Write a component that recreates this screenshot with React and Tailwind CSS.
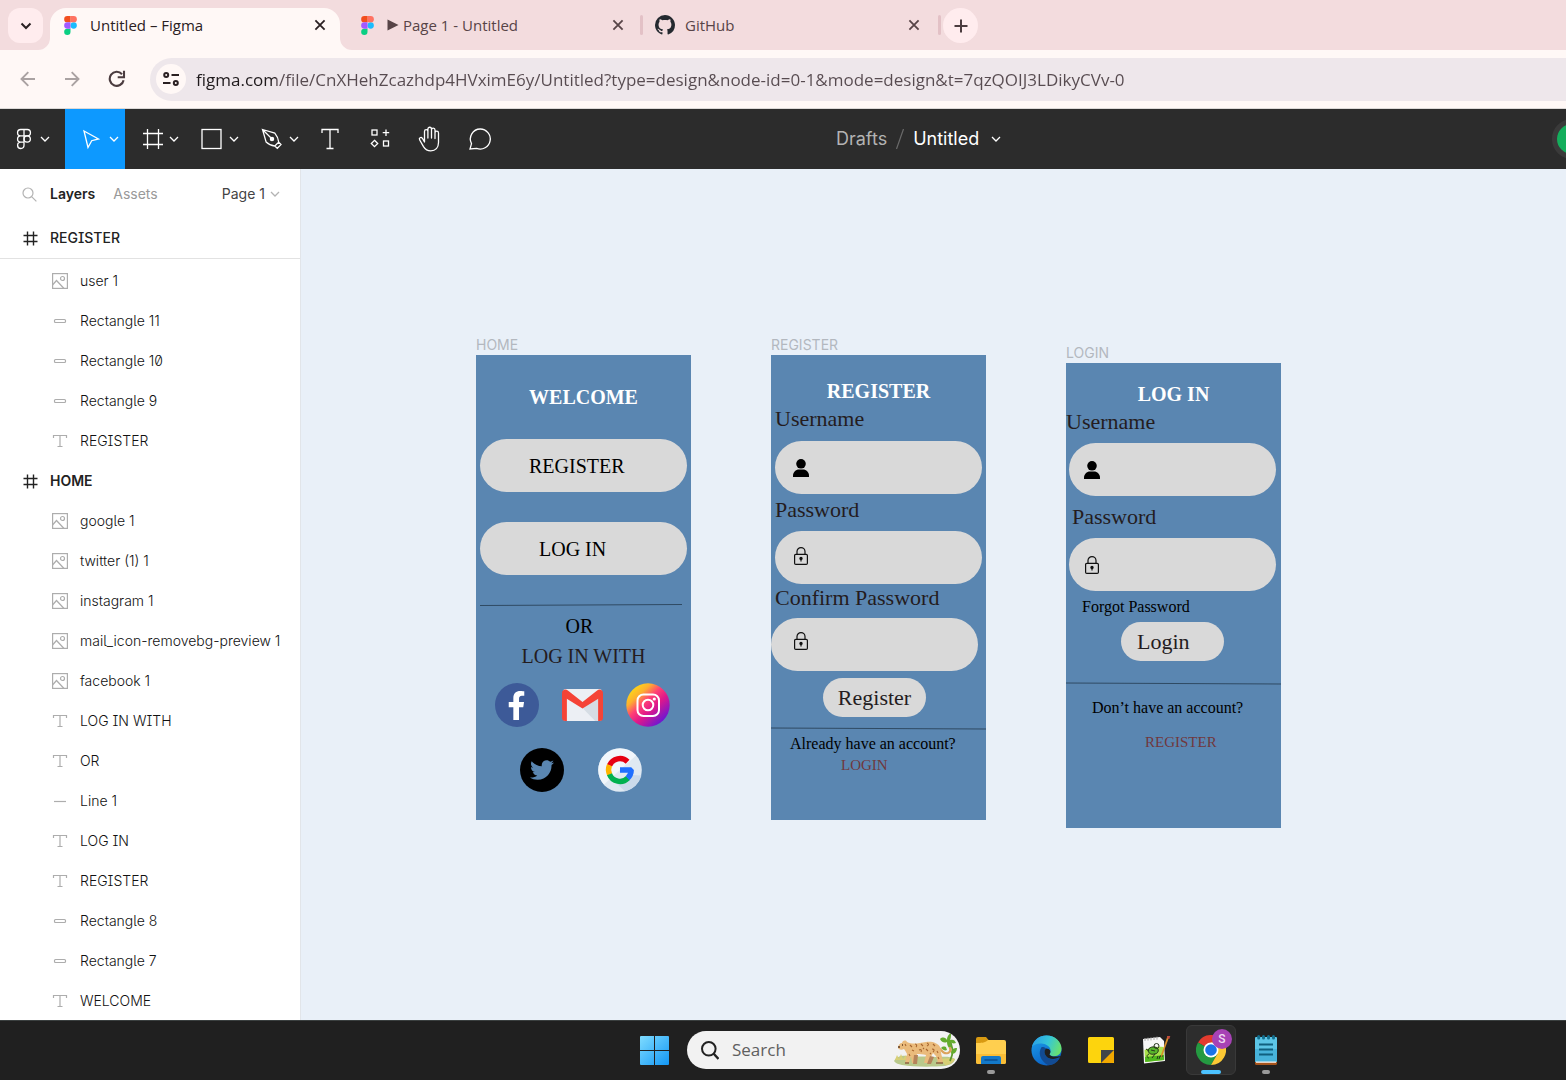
import React from "react";
import { FaFacebookF, FaTwitter } from "react-icons/fa";
import { VscGithubInverted } from "react-icons/vsc";

/* ---------- browser chrome icons ---------- */

function FigmaLogo() {
  return (
    <svg width="13" height="19" viewBox="0 0 38 57" className="shrink-0">
      <path fill="#1abcfe" d="M19 28.5a9.5 9.5 0 1 1 19 0 9.5 9.5 0 0 1-19 0z" />
      <path fill="#0acf83" d="M0 47.5A9.5 9.5 0 0 1 9.5 38H19v9.5a9.5 9.5 0 1 1-19 0z" />
      <path fill="#ff7262" d="M19 0v19h9.5a9.5 9.5 0 1 0 0-19H19z" />
      <path fill="#f24e1e" d="M0 9.5A9.5 9.5 0 0 0 9.5 19H19V0H9.5A9.5 9.5 0 0 0 0 9.5z" />
      <path fill="#a259ff" d="M0 28.5A9.5 9.5 0 0 0 9.5 38H19V19H9.5A9.5 9.5 0 0 0 0 28.5z" />
    </svg>
  );
}

function Cross() {
  return (
    <svg width="12" height="12" viewBox="0 0 12 12" fill="none" stroke="currentColor" strokeWidth="1.8">
      <path d="M1.4 1.4l9.2 9.2M10.6 1.4l-9.2 9.2" />
    </svg>
  );
}

function TabFoot({ flip }) {
  return (
    <svg
      width="12"
      height="12"
      viewBox="0 0 12 12"
      fill="#fff8f6"
      className={flip ? "absolute -right-3 bottom-0" : "absolute -left-3 bottom-0"}
    >
      {flip ? <path d="M0 0v12h12A12 12 0 0 1 0 0z" /> : <path d="M12 0v12H0A12 12 0 0 0 12 0z" />}
    </svg>
  );
}

function Tab({ icon, title, active, className }) {
  return (
    <div
      className={
        "relative flex h-[42px] items-center gap-3 text-[15px] " +
        (active ? "rounded-t-2xl bg-[#fff8f6] text-[#2a2022] " : "text-[#574447] ") +
        className
      }
    >
      {active && <TabFoot />}
      {active && <TabFoot flip />}
      <span className="flex w-4 shrink-0 justify-center">{icon}</span>
      <span className="grow truncate pb-2 leading-5">{title}</span>
      <button aria-label="Close tab" className="pb-2">
        <Cross />
      </button>
    </div>
  );
}

function TabStrip() {
  return (
    <div className="flex h-[50px] items-end bg-[#f3dcde] font-['Open_Sans','Noto_Sans',sans-serif]">
      <button aria-label="Search tabs" className="mr-[7px] mb-[7px] ml-2 flex size-[35px] shrink-0 items-center justify-center rounded-xl bg-[#ffecee] text-[#2a2022]">
        <svg width="12" height="8" viewBox="0 0 12 8" fill="none" stroke="currentColor" strokeWidth="2">
          <path d="M1.5 1.5L6 6l4.500-4.500" />
        </svg>
      </button>
      <Tab active className="w-[290px] pr-3.5 pl-3" title="Untitled – Figma" icon={<span className="pb-2"><FigmaLogo /></span>} />
      <Tab
        className="ml-[7px] w-[291px] pr-3.5 pl-3"
        icon={<span className="pb-2"><FigmaLogo /></span>}
        title={
          <span className="flex items-center gap-1">
            <svg width="12" height="12" viewBox="0 0 12 12" fill="currentColor">
              <path d="M.5.5L11.500 6 .5 11.500z" />
            </svg>
            Page 1 - Untitled
          </span>
        }
      />
      <span className="mb-[15px] ml-0.5 h-5 w-[3px] rounded bg-[#e3c1c6]" />
      <Tab className="w-[295px] pr-[18px] pl-3.5" title="GitHub" icon={<VscGithubInverted size={20} color="#24292f" className="mb-2 shrink-0" />} />
      <span className="mb-[15px] h-5 w-[3px] rounded bg-[#e3c1c6]" />
      <button aria-label="New tab" className="mb-[7px] ml-0.5 flex size-[35px] shrink-0 items-center justify-center rounded-full bg-[#ffecee] text-[#4b3c3f]">
        <svg width="14" height="14" viewBox="0 0 14 14" fill="none" stroke="currentColor" strokeWidth="2">
          <path d="M7 .5v13M.5 7h13" />
        </svg>
      </button>
    </div>
  );
}

function AddressBar() {
  return (
    <div className="flex h-[59px] items-center border-b border-[#dcd9d7] bg-[#fff8f6]">
      <button aria-label="Back" className="ml-5 text-[#aaa2a2]">
        <svg width="16" height="16" viewBox="0 0 16 16" fill="none" stroke="currentColor" strokeWidth="1.9">
          <path d="M15 8H1.800M8.300 1.200L1.500 8l6.800 6.800" />
        </svg>
      </button>
      <button aria-label="Forward" className="ml-7 text-[#aaa2a2]">
        <svg width="16" height="16" viewBox="0 0 16 16" fill="none" stroke="currentColor" strokeWidth="1.900">
          <path d="M1 8h13.200M7.700 1.200L14.500 8l-6.800 6.800" />
        </svg>
      </button>
      <button aria-label="Reload" className="ml-7 text-[#4b3c3f]">
        <svg width="18" height="18" viewBox="0 0 18 18" fill="none" stroke="currentColor" strokeWidth="2.100">
          <path d="M15.600 10.200A7 7 0 1 1 14 4.200" />
          <path d="M16 .8v6.400H9.700" />
        </svg>
      </button>
      <div className="ml-6 flex h-[43px] grow items-center rounded-l-full bg-[#eee7eb]">
        <button aria-label="Site information" className="ml-1.5 flex size-[30px] shrink-0 items-center justify-center rounded-full bg-[#fff8f6] text-[#2a2022]">
          <svg width="16" height="14" viewBox="0 0 16 14" fill="none" stroke="currentColor" strokeWidth="2">
            <circle cx="3.200" cy="3" r="2" />
            <path d="M8.500 3H16M0 11h7.500" />
            <circle cx="12.800" cy="11" r="2" />
          </svg>
        </button>
        <input
          aria-label="Address"
          readOnly
          value="figma.com/file/CnXHehZcazhdp4HVximE6y/Untitled?type=design&node-id=0-1&mode=design&t=7qzQOIJ3LDikyCVv-0"
          className="ml-2.5 h-8 min-w-0 grow bg-[linear-gradient(to_right,#1f1a1c_80px,#574b50_80px)] bg-clip-text font-['Open_Sans','Noto_Sans',sans-serif] text-[17px] text-transparent outline-none"
        />
      </div>
    </div>
  );
}

/* ---------- editor toolbar ---------- */

function Chevron({ className = "" }) {
  return (
    <svg width="10" height="6" viewBox="0 0 10 6" fill="none" stroke="currentColor" strokeWidth="1.300" className={"shrink-0 " + className}>
      <path d="M1 1l4 4 4-4" />
    </svg>
  );
}

function ToolIcon({ children }) {
  return (
    <svg width="24" height="24" viewBox="0 0 24 24" fill="none" stroke="currentColor" strokeWidth="1.300" className="shrink-0">
      {children}
    </svg>
  );
}

function Toolbar() {
  const menuTool = "flex h-full w-[60px] shrink-0 items-center gap-[5px] pl-[15px]";
  const tool = "flex h-full w-[50px] shrink-0 items-center justify-center";
  return (
    <div className="flex h-[60px] items-center overflow-hidden bg-[#2c2c2c] text-white">
      <div className="flex h-full shrink-0">
        <button aria-label="Main menu" className="flex h-full w-[65px] items-center gap-1 pl-3">
          <ToolIcon>
            <path d="M8.700 2.500H12v6.300H8.700a3.150 3.150 0 0 1 0-6.300zM12 2.500h3.300a3.150 3.150 0 0 1 0 6.300H12zM8.700 8.800H12v6.300H8.700a3.150 3.150 0 0 1 0-6.300zM8.700 15.100H12v3.200a3.200 3.200 0 1 1-3.300-3.200z" />
            <circle cx="15.200" cy="11.950" r="3.150" />
          </ToolIcon>
          <Chevron />
        </button>
        <button aria-label="Move" className="flex h-full w-[60px] items-center gap-1.5 bg-[#0d99ff] pl-3.5">
          <ToolIcon>
            <path d="M5 4l14.500 8-6.800 1.700L9 20.500z" strokeLinejoin="miter" />
          </ToolIcon>
          <Chevron />
        </button>
        <button aria-label="Frame" className={menuTool}>
          <ToolIcon>
            <path d="M7.500 2v20M18.500 2v20M3 6.500h20M3 17.500h20" />
          </ToolIcon>
          <Chevron />
        </button>
        <button aria-label="Shape" className={menuTool}>
          <ToolIcon>
            <rect x="2" y="2.500" width="19" height="19" />
          </ToolIcon>
          <Chevron />
        </button>
        <button aria-label="Pen" className={menuTool}>
          <ToolIcon>
            <path d="M2.500 2.500l12.300 3.600c2.300 2.700 3.500 5.700 3.900 9l2.300 2.500-3.700 3.700-2.500-2.300c-3.300-.4-6.300-1.600-8.700-4z M14.800 19l3.900-3.900M2.500 2.500l8.300 8.300" />
            <circle cx="12" cy="12" r="1.600" fill="currentColor" />
          </ToolIcon>
          <Chevron />
        </button>
        <button aria-label="Text" className={tool}>
          <ToolIcon>
            <path d="M4 6V2.500h16V6M12 2.500v19M8.500 21.500h7" />
          </ToolIcon>
        </button>
        <button aria-label="Resources" className={tool}>
          <ToolIcon>
            <rect x="4" y="3" width="5" height="5" />
            <path d="M18 2.500v6.500M14.700 5.700h6.500M6.500 13.300l3.200 3.200-3.200 3.200-3.200-3.200z" />
            <rect x="15.500" y="14" width="5" height="5" />
          </ToolIcon>
        </button>
        <button aria-label="Hand" className={tool}>
          <svg width="26" height="28" viewBox="0 0 26 28" fill="none" stroke="currentColor" strokeWidth="1.300" strokeLinejoin="round" className="shrink-0">
            <path d="M7.500 17V6.400c0-2.400 3.400-2.400 3.400 0V13 4.200c0-2.600 3.600-2.600 3.600 0V13 5c0-2.500 3.500-2.500 3.500 0v8.500V8c0-2.400 3.500-2.400 3.500 0v9.500c0 5-3 8.300-7.700 8.300-4 0-5.800-1.800-7.300-4.200L2.700 15c-1.200-2 1.300-3.500 2.700-1.700z" />
          </svg>
        </button>
        <button aria-label="Comment" className={tool}>
          <ToolIcon>
            <path d="M12.200 2A10 10 0 1 1 8.600 21.300L2 22l1.500-5.400A10 10 0 0 1 12.200 2z" />
          </ToolIcon>
        </button>
      </div>
      <div className="ml-[331px] flex shrink-0 items-center font-['Inter',sans-serif] text-[18px] leading-6">
        <a href="#drafts" className="text-[#b3b3b3]">Drafts</a>
        <svg width="10" height="20" viewBox="0 0 10 20" stroke="#6b6b6b" strokeWidth="1.200" className="mx-2">
          <path d="M1.500 20L8.500 0" />
        </svg>
        <button className="flex items-center gap-3">
          Untitled
          <Chevron />
        </button>
      </div>
      <span className="-mr-[26px] ml-auto size-10 shrink-0 rounded-full border-[5px] border-[#3a3a3a] bg-[#14ae5c]" />
    </div>
  );
}

/* ---------- layers panel ---------- */

function LayerIcon({ kind }) {
  return (
    <svg width="16" height="16" viewBox="0 0 16 16" fill="none" stroke="#adadad" strokeWidth="1.200" className="shrink-0">
      {kind === "image" && (
        <>
          <rect x=".6" y=".6" width="14.800" height="14.800" />
          <circle cx="10.500" cy="5.500" r="2" />
          <path d="M.5 12l4-4.500 7.500 8" />
        </>
      )}
      {kind === "rect" && <rect x="2.500" y="6.500" width="11" height="3" rx="1" />}
      {kind === "line" && <path d="M2 8.500h12" />}
      {kind === "text" && <path d="M1.500 5V2.500h13V5M8 2.500v11M5.500 13.500h5" />}
    </svg>
  );
}

function FrameGlyph() {
  return (
    <svg width="15" height="15" viewBox="0 0 15 15" fill="none" stroke="#222" strokeWidth="1.400" className="shrink-0">
      <path d="M4.500 .5v14M10.500 .5v14M.5 4.500h14M.5 10.500h14" />
    </svg>
  );
}

const registerLayers = [
  ["image", "user 1"],
  ["rect", "Rectangle 11"],
  ["rect", "Rectangle 10"],
  ["rect", "Rectangle 9"],
  ["text", "REGISTER"],
];

const homeLayers = [
  ["image", "google 1"],
  ["image", "twitter (1) 1"],
  ["image", "instagram 1"],
  ["image", "mail_icon-removebg-preview 1"],
  ["image", "facebook 1"],
  ["text", "LOG IN WITH"],
  ["text", "OR"],
  ["line", "Line 1"],
  ["text", "LOG IN"],
  ["text", "REGISTER"],
  ["rect", "Rectangle 8"],
  ["rect", "Rectangle 7"],
  ["text", "WELCOME"],
];

function LayerRows({ items }) {
  return items.map(([kind, name]) => (
    <li key={name} className="flex h-10 items-center gap-3 pl-[52px] font-light text-[#111]">
      <LayerIcon kind={kind} />
      <span className="whitespace-nowrap">{name}</span>
    </li>
  ));
}

function Sidebar() {
  return (
    <aside className="w-[301px] shrink-0 overflow-hidden border-r border-[#e2e5e9] bg-white font-['Inter',sans-serif] text-[14px] leading-5 [font-feature-settings:'ss02','zero','cv05','cv08']">
      <div className="flex h-[50px] items-center pr-5 pl-[22px]">
        <svg width="15" height="15" viewBox="0 0 15 15" fill="none" stroke="#b3b3b3" strokeWidth="1.200" className="mr-[13px]">
          <circle cx="6" cy="6" r="5" />
          <path d="M9.600 9.600l4.800 4.800" />
        </svg>
        <button className="font-semibold text-[#222]">Layers</button>
        <button className="ml-[18px] text-[#999]">Assets</button>
        <button className="ml-auto flex items-center gap-[5px] text-[#444]">
          Page 1
          <Chevron className="text-[#b3b3b3]" />
        </button>
      </div>
      <div className="mb-0.5 flex h-10 items-center gap-3 border-b border-[#e2e2e2] pb-px pl-[23px] font-medium text-[#222]">
        <FrameGlyph />
        REGISTER
      </div>
      <ul>
        <LayerRows items={registerLayers} />
        <li className="flex h-10 items-center gap-3 pl-[23px] font-semibold text-[#222]">
          <FrameGlyph />
          HOME
        </li>
        <LayerRows items={homeLayers} />
      </ul>
    </aside>
  );
}

/* ---------- canvas frames ---------- */

function Frame({ name, className, children }) {
  return (
    <section className={"absolute " + className}>
      <h2 className="h-5 font-['Inter',sans-serif] text-[14px] leading-5 text-[#b3b8bf]">{name}</h2>
      <div className="flex h-[465px] w-[215px] flex-col bg-[#5a86b1] font-['Liberation_Serif',serif]">{children}</div>
    </section>
  );
}

function Rule({ d, className }) {
  return (
    <svg width="215" height="4" viewBox="0 0 215 4" fill="none" stroke="#2f4a63" strokeWidth="1" className={"shrink-0 " + className}>
      <path d={d} />
    </svg>
  );
}

function UserIcon() {
  return (
    <svg width="16" height="18" viewBox="0 0 16 18" className="shrink-0">
      <circle cx="8" cy="4.800" r="4.800" />
      <path d="M0 18v-1.500C0 13 2.800 10.400 6 10.400h4c3.200 0 6 2.600 6 6.100V18z" />
    </svg>
  );
}

function LockIcon() {
  return (
    <svg width="16" height="18" viewBox="0 0 16 18" fill="none" stroke="#111" strokeWidth="1.200" className="shrink-0">
      <rect x="1.600" y="7.300" width="12.800" height="10.100" rx="1.200" />
      <path d="M4 7.300V4.600a4 4 0 0 1 8 0v2.700" />
      <circle cx="8" cy="11.400" r="1.100" fill="#111" />
      <path d="M8 11.500v3" />
    </svg>
  );
}

function Field({ id, label, type, labelClass, pillClass }) {
  return (
    <>
      <label htmlFor={id} className={"text-[22px] leading-7 text-[#241c1e] " + labelClass}>
        {label}
      </label>
      <div className={"flex h-[53px] w-[207px] shrink-0 items-center rounded-full bg-[#d9d9d9] " + pillClass}>
        {type === "text" ? <UserIcon /> : <LockIcon />}
        <input id={id} type={type} className="ml-2 h-8 w-32 bg-transparent outline-none" />
      </div>
    </>
  );
}

function GmailIcon() {
  return (
    <svg width="41" height="32" viewBox="0 0 42 32" preserveAspectRatio="none">
      <rect x="1" y="0" width="40" height="32" rx="3" fill="#eceff4" />
      <path d="M21 19l16-11v24H34z" fill="#d6dde4" />
      <path d="M5 5v27H3.500A3.500 3.500 0 0 1 0 28.500V5zM37 5v27h1.500a3.500 3.500 0 0 0 3.500-3.500V5z" fill="#f54336" />
      <path d="M0 4C0 1 3.500 -.5 6 1.500L21 13 36 1.500C38.500 -.5 42 1 42 4c0 2-1 3.200-2 4L21 19.500 2 8C1 7.200 0 6 0 4z" fill="#f54336" />
    </svg>
  );
}

function InstagramIcon() {
  return (
    <svg width="44" height="44" viewBox="0 0 44 44">
      <defs>
        <linearGradient id="insta" x1="0.120" y1="0.100" x2="0.850" y2="0.900">
          <stop offset="0" stopColor="#fddb16" />
          <stop offset=".22" stopColor="#fdb02e" />
          <stop offset=".42" stopColor="#ff3f75" />
          <stop offset=".62" stopColor="#e0188a" />
          <stop offset="1" stopColor="#6416d8" />
        </linearGradient>
      </defs>
      <circle cx="22" cy="22" r="21.700" fill="url(#insta)" />
      <g fill="none" stroke="#fff" strokeWidth="2">
        <rect x="11.500" y="11.500" width="21.500" height="21.500" rx="6" />
        <circle cx="22" cy="22" r="5.300" />
      </g>
      <circle cx="28.300" cy="16" r="1.600" fill="#fff" />
    </svg>
  );
}

function GoogleIcon() {
  return (
    <svg width="44" height="44" viewBox="0 0 44 44">
      <circle cx="22" cy="22" r="21.800" fill="#dfe9f2" />
      <path d="M.3 22A21.700 21.700 0 0 1 38 7.500L6 36.500A21.700 21.700 0 0 1 .3 22z" fill="#f1f6fb" />
      <path d="M18 35l16.500-8 9 .5A22 22 0 0 1 27 43.300z" fill="#cbdaea" />
      <g fill="none" strokeWidth="5.400">
        <path d="M11.500 17.600A11.200 11.200 0 0 1 29.600 13.700" stroke="#e60012" />
        <path d="M11.700 26.600A11.200 11.200 0 0 1 11.500 17.200" stroke="#ffb400" />
        <path d="M30 30A11.200 11.200 0 0 1 11.500 26.200" stroke="#00b14f" />
        <path d="M22 22h11.200c0 3.300-1.200 6-3.600 8.300" stroke="#1f6fff" strokeLinejoin="bevel" />
      </g>
    </svg>
  );
}

function HomeFrame() {
  const pill = "flex h-[53px] w-[207px] shrink-0 items-center rounded-full bg-[#d9d9d9] text-[20px] text-black";
  return (
    <Frame name="HOME" className="top-[166px] left-[175px]">
      <h3 className="mt-7 text-center text-[20px] leading-7 font-bold text-white">WELCOME</h3>
      <button className={"mt-7 ml-1 pl-[49px] " + pill}>REGISTER</button>
      <button className={"mt-[30px] ml-1 pl-[59px] " + pill}>LOG IN</button>
      <Rule className="mt-7" d="M4 2.500L206 1.500" />
      <p className="mt-1 pr-2 text-center text-[20px] leading-[30px] text-black">OR</p>
      <p className="text-center text-[20px] leading-[30px] text-[#241c1e]">LOG IN WITH</p>
      <div className="mt-3 flex items-center gap-[23px] pl-[19px]">
        <button aria-label="Facebook" className="flex size-11 items-end justify-center rounded-full bg-[#3d5a98] pr-0.5 pb-[7px] text-white">
          <FaFacebookF size={29} />
        </button>
        <button aria-label="Mail">
          <GmailIcon />
        </button>
        <button aria-label="Instagram">
          <InstagramIcon />
        </button>
      </div>
      <div className="mt-[21px] flex gap-[34px] pl-11">
        <button aria-label="Twitter" className="flex size-11 items-center justify-center rounded-full bg-black text-[#5a86b1]">
          <FaTwitter size={24} />
        </button>
        <button aria-label="Google">
          <GoogleIcon />
        </button>
      </div>
    </Frame>
  );
}

function RegisterFrame() {
  return (
    <Frame name="REGISTER" className="top-[166px] left-[470px]">
      <h3 className="mt-[22px] text-center text-[20px] leading-7 font-bold text-white">REGISTER</h3>
      <Field id="reg-user" type="text" label="Username" labelClass="pl-1" pillClass="mt-2 ml-1 pl-[18px]" />
      <Field id="reg-pass" type="password" label="Password" labelClass="mt-0.5 pl-1" pillClass="mt-[7px] ml-1 pl-[18px] pb-1" />
      <Field id="reg-confirm" type="password" label="Confirm Password" labelClass="pl-1" pillClass="mt-1.5 pl-[22px] pb-2" />
      <button className="mt-[7px] ml-[52px] h-[39px] w-[103px] shrink-0 rounded-full bg-[#d9d9d9] text-[22px] leading-7 text-[#241c1e]">Register</button>
      <Rule className="mt-2.5" d="M0 1L215 2" />
      <p className="mt-[3px] pl-[19px] text-[16px] leading-5 text-black">Already have an account?</p>
      <a href="#login" className="mt-px pl-[70px] text-[15px] leading-5 text-[#70383d]">LOGIN</a>
    </Frame>
  );
}

function LoginFrame() {
  return (
    <Frame name="LOGIN" className="top-[174px] left-[765px]">
      <h3 className="mt-[17px] text-center text-[20px] leading-7 font-bold text-white">LOG IN</h3>
      <Field id="log-user" type="text" label="Username" labelClass="" pillClass="mt-[7px] ml-[3px] pl-[15px]" />
      <Field id="log-pass" type="password" label="Password" labelClass="mt-[7px] pl-1.5" pillClass="mt-[7px] ml-[3px] pl-[15px]" />
      <a href="#forgot" className="mt-1.5 pl-4 text-[16px] leading-5 text-black">Forgot Password</a>
      <button className="mt-[5px] ml-[55px] h-[39px] w-[103px] shrink-0 rounded-full bg-[#d9d9d9] pl-4 text-left text-[22px] leading-7 text-[#241c1e]">Login</button>
      <Rule className="mt-[21px]" d="M0 1L215 2" />
      <p className="mt-3 pl-[26px] text-[16px] leading-5 text-black">Don’t have an account?</p>
      <a href="#register" className="mt-3.5 pl-[79px] text-[15px] leading-5 text-[#70383d]">REGISTER</a>
    </Frame>
  );
}

/* ---------- taskbar ---------- */

function Jaguar() {
  return (
    <svg width="64" height="34" viewBox="0 0 64 34" className="shrink-0">
      <path d="M0 28c2-4 7-6 12-5 8 1 20 0 30 1 8 0 14-1 19 2-1 4-5 6-10 7-14 1-32 1-43-1-4-1-7-2-8-4z" fill="#b9c98b" />
      <path d="M1 27l2-5 2 4 2-5 2 5 3-4 1 5zM47 26c5-1 9-1 14 0-2 4-6 6-10 6z" fill="#d8cf75" />
      <path d="M56 28C60 20 59 12 54 5" fill="none" stroke="#5f9a2d" strokeWidth="1.800" />
      <path d="M46 6c3-3 6-1 7 1 0-4 2-6 4-7 0 3 0 5-1 7 3-1 5 0 6 3-3 1-4 0-6-1 2 3 2 5 1 7-3-1-4-4-4-7-2 1-5 1-7-3zM57 19c2-4 4-4 6-4 0 3-2 6-5 6zM52 14c-3-1-4 0-5 1 2 2 4 3 6 2z" fill="#63ab2d" />
      <path d="M45 15c4 4 5 6 9 5 2-1 3-3 2-5" fill="none" stroke="#dca35c" strokeWidth="2.200" strokeLinecap="round" />
      <path d="M4 15c0-3 2-5 4-5 1-3 4-3 5-1 6 3 12 1 19 0 6-1 12 1 14 5 1 4 1 7 2 10l1 6h-5l-2-7-3-3-2 4-2 6h-5l2-8c-3-1-6-1-9-1l-1 9h-4l-1-7-2 7h-4l2-9c-1-2-2-4-3-5-2 1-5 1-6-1z" fill="#eabb7c" />
      <path d="M24 22l-1 9h-4l1-9zM40 24l-3 7h-4l3-8z" fill="#b5835a" />
      <path d="M11 30h4M42 30h7" stroke="#8d6141" strokeWidth="1.500" />
      <g fill="none" stroke="#a8662f" strokeWidth="1.100">
        <path d="M16 12l2 2M21 11c2 0 2 2 1 3M27 11l2 2M33 10c2 1 2 2 0 3M39 11l2 2M18 17l2 1M25 17c2-1 3 0 2 2M32 16l2 2M38 16c2 0 3 1 1 3M43 18l1 2M15 21l1 2M44 24l1 2M29 15l1 1M11 11l1 2M36 20l1 1" />
      </g>
      <path d="M4 14l2 0M8 12h1" stroke="#5d3b20" strokeWidth="1.400" />
    </svg>
  );
}

function FolderIcon() {
  return (
    <svg width="30" height="28" viewBox="0 0 30 28">
      <path d="M0 3a2 2 0 0 1 2-2h8l3 3.500v5H0z" fill="#d89a12" />
      <path d="M0 7c5 0 9 0 12-3h16a2 2 0 0 1 2 2v20a2 2 0 0 1-2 2H2a2 2 0 0 1-2-2z" fill="#ffcf4f" />
      <path d="M0 18h30v8a2 2 0 0 1-2 2H2a2 2 0 0 1-2-2z" fill="#f9bd36" />
      <path d="M5 28v-6a2 2 0 0 1 2-2h16a2 2 0 0 1 2 2v6z" fill="#1379c9" />
      <path d="M9 24h12" stroke="#0b4f93" strokeWidth="1.500" strokeLinecap="round" />
    </svg>
  );
}

function EdgeIcon() {
  return (
    <svg width="31" height="31" viewBox="0 0 32 32">
      <defs>
        <linearGradient id="edge-top" x1="0" y1="0.300" x2="1" y2="0.600">
          <stop offset="0" stopColor="#2a9fe8" />
          <stop offset=".5" stopColor="#35c6d8" />
          <stop offset="1" stopColor="#6be26a" />
        </linearGradient>
        <linearGradient id="edge-left" x1="0" y1="0" x2="0.500" y2="1">
          <stop offset="0" stopColor="#1da3ee" />
          <stop offset="1" stopColor="#0b61c4" />
        </linearGradient>
      </defs>
      <circle cx="16" cy="16" r="15.500" fill="url(#edge-left)" />
      <path d="M29.800 23L32 20v4l-3 3z" fill="#202020" />
      <path d="M1 12C3 4.500 9 .5 16 .5c9 0 15.500 6.500 15.500 13.500 0 5-3.500 8-7.500 8-3.500 0-5.500-1.300-4.500-2.800C22 15 18.500 10 12.500 9 7.500 8 3 9.500 1 12z" fill="url(#edge-top)" />
      <path d="M11 12.500C7 18 9 27 18 31.300 24 31 28.500 27 29.800 23c-5 3.500-13 2.500-15.300-2.500-1-2.500-.5-5 1-6.500-1.500-1.500-3.500-1.700-4.500-1.500z" fill="#124b93" />
      <path d="M15.500 14c-2.500 2.500-2 7 2 9.500 4.500 2.400 9.500 1.300 13-1.300 0-1-6 1-9.500-.5-2-.8-2.200-1.600-1.500-2.500 1.300-2 .3-5-4-5.200z" fill="#202020" />
    </svg>
  );
}

function StickyIcon() {
  return (
    <svg width="26" height="26" viewBox="0 0 26 26">
      <path d="M1.500 0h23A1.500 1.500 0 0 1 26 1.500V26H1.500A1.500 1.500 0 0 1 0 24.500v-23A1.500 1.500 0 0 1 1.500 0z" fill="#fdd40d" />
      <path d="M13 13h13v11.500a1.500 1.500 0 0 1-1.500 1.500H13z" fill="#f2a900" />
      <path d="M13 13h13L13 26z" fill="#40444a" />
    </svg>
  );
}

function NotepadPlusIcon() {
  return (
    <svg width="29" height="28" viewBox="0 0 29 28">
      <path d="M1 3l17-2 4 4 1 20-21 2.500z" fill="#f7f7f7" />
      <path d="M2.500 14c6-3 13-4 19-3l.6 13-19 2z" fill="#a8e04a" />
      <path d="M3 21l19-2 .2 5-19 2z" fill="#4fb71d" />
      <path d="M3 2v3M6 1.700v3M9 1.400v3M12 1v3M15 .7v3" stroke="#aaa" strokeWidth="1" />
      <path d="M6 14c2-4 8-4 10-1 1 3-1 5-4 5-3 1-6-1-6-4z" fill="#58b52b" />
      <g fill="none" stroke="#26351b" strokeWidth="1">
        <circle cx="14.500" cy="10" r="2.500" />
        <path d="M6 14c2-4 8-4 10-1 1 3-1 5-4 5-3 1-6-1-6-4zM4 13l3 2M7 18c-3 1-2 4 0 4M13 18l-3 4M16 20l-1 3M18 20l-1 3M18 20h3M9 14l4 1" />
      </g>
      <path d="M27.500 0L20.500 19l-1.500 3 .2-3.500L25.500 0z" fill="#d98d25" />
      <path d="M25.300 0h3l-1 3-2.500-.8z" fill="#c04b3d" />
    </svg>
  );
}

function ChromeIcon() {
  return (
    <svg width="30" height="30" viewBox="0 0 30 30">
      <path d="M15 15L2 7.500A15 15 0 0 1 28 7.500H15z" fill="#e33b2e" />
      <path d="M15 15L2 7.500A15 15 0 0 0 15 30l6.500-11.300z" fill="#249a41" />
      <path d="M15 15V7.500h13A15 15 0 0 1 15 30l6.500-11.300z" fill="#fcc934" />
      <path d="M15 7.500h13l-6.500 11.200z" fill="#fcc934" />
      <circle cx="15" cy="15" r="7.500" fill="#fff" />
      <circle cx="15" cy="15" r="5.800" fill="#1a73e8" />
    </svg>
  );
}

function NotepadIcon() {
  return (
    <svg width="22" height="30" viewBox="0 0 22 30">
      <rect x="0" y="2" width="22" height="25.500" rx="1" fill="#5cc5e6" />
      <path d="M0 14h22v13H0z" fill="#47b3da" />
      <path d="M0 27h22v1.500a1.500 1.500 0 0 1-1.500 1.500h-19A1.500 1.500 0 0 1 0 28.500z" fill="#a6541c" />
      <path d="M1 26.500h20v1.300H1z" fill="#f1f1f1" />
      <path d="M4 9.500h14M4 14.500h14M4 19.500h14" stroke="#10607f" strokeWidth="1.800" />
      <g fill="#14708f">
        <rect x="2.200" y="0" width="3" height="4.500" rx="1.500" />
        <rect x="7" y="0" width="3" height="4.500" rx="1.500" />
        <rect x="12" y="0" width="3" height="4.500" rx="1.500" />
        <rect x="17" y="0" width="3" height="4.500" rx="1.500" />
      </g>
    </svg>
  );
}

function TaskButton({ label, running, current, children }) {
  return (
    <button
      aria-label={label}
      className={
        "relative flex size-[50px] shrink-0 items-center justify-center rounded-md " +
        (current ? "border border-[#393939] bg-[#2d2d2d]" : "")
      }
    >
      {children}
      {running && <span className="absolute bottom-px left-1/2 h-1 w-2 -translate-x-1/2 rounded-full bg-[#9a9a9a]" />}
      {current && <span className="absolute bottom-0 left-1/2 h-1 w-5 -translate-x-1/2 rounded-full bg-[#4cc2ff]" />}
    </button>
  );
}

function Taskbar() {
  return (
    <footer className="flex h-[60px] shrink-0 items-center border-t border-[#3a3f3f] bg-[#202020] pb-px pl-[629px]">
      <TaskButton label="Start">
        <svg width="29" height="29" viewBox="0 0 29 29">
          <defs>
            <linearGradient id="win" x1="0" y1="0" x2="1" y2="1">
              <stop offset="0" stopColor="#7fdcff" />
              <stop offset="1" stopColor="#1397f5" />
            </linearGradient>
          </defs>
          <path d="M1 0h13v14H0V1a1 1 0 0 1 1-1zM15 0h13a1 1 0 0 1 1 1v13H15zM0 15h14v14H1a1 1 0 0 1-1-1zM15 15h14v13a1 1 0 0 1-1 1H15z" fill="url(#win)" />
        </svg>
      </TaskButton>
      <label className="mr-1.5 ml-2 flex h-[38px] w-[273px] shrink-0 items-center overflow-hidden rounded-full bg-[#f2f2f2] pr-0.5 pl-3.5">
        <svg width="18" height="19" viewBox="0 0 18 19" fill="none" stroke="#222" strokeWidth="2" className="shrink-0">
          <circle cx="7.800" cy="7.800" r="6.800" />
          <path d="M12.500 12.500l5 5.500" strokeWidth="2.400" />
        </svg>
        <input
          aria-label="Search"
          placeholder="Search"
          className="ml-[13px] min-w-0 grow bg-transparent font-['Open_Sans','Noto_Sans',sans-serif] text-[17px] leading-6 outline-none placeholder:text-[#5f5f5f]"
        />
        <Jaguar />
      </label>
      <div className="flex gap-[5px]">
        <TaskButton label="File Explorer" running>
          <FolderIcon />
        </TaskButton>
        <TaskButton label="Edge">
          <EdgeIcon />
        </TaskButton>
        <TaskButton label="Sticky Notes">
          <StickyIcon />
        </TaskButton>
        <TaskButton label="Notepad++">
          <NotepadPlusIcon />
        </TaskButton>
        <TaskButton label="Chrome" current>
          <ChromeIcon />
          <span className="absolute top-[3px] right-[3px] flex size-5 items-center justify-center rounded-full bg-[#a742b5] font-['Roboto',sans-serif] text-[12px] leading-none font-medium text-[#f0dcf3]">
            S
          </span>
        </TaskButton>
        <TaskButton label="Notepad" running>
          <NotepadIcon />
        </TaskButton>
      </div>
    </footer>
  );
}

export default function App() {
  return (
    <div className="flex h-screen flex-col overflow-hidden">
      <header className="shrink-0">
        <TabStrip />
        <AddressBar />
        <Toolbar />
      </header>
      <div className="flex min-h-0 flex-1">
        <Sidebar />
        <main className="relative flex-1 overflow-hidden bg-[#e9f0f8]">
          <HomeFrame />
          <RegisterFrame />
          <LoginFrame />
        </main>
      </div>
      <Taskbar />
    </div>
  );
}
